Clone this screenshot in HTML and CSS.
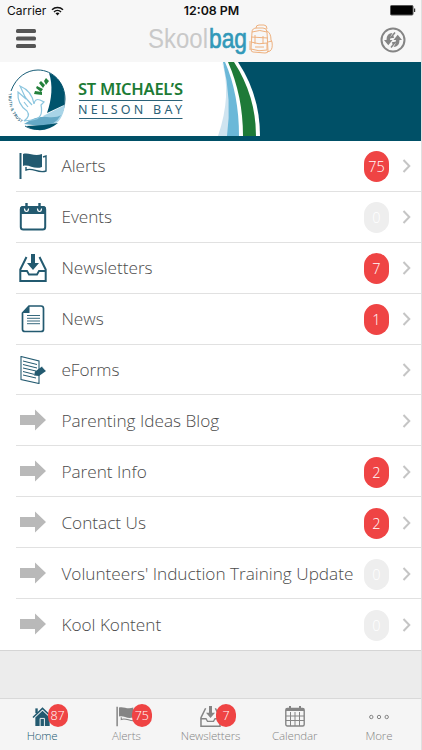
FILE: index.html
```html
<!DOCTYPE html>
<html lang="en">
<head>
    <meta charset="UTF-8">
    <meta name="viewport" content="width=device-width, initial-scale=1.0">
    <title>Skoolbag</title>
    <link rel="stylesheet" href="styles.css">
</head>
<body>
    <!-- shared icons -->
    <svg class="defs" width="0" height="0">
        <symbol id="flag" viewBox="0 0 28 28">
            <path d="M.5 1h2v26h-2z" fill="currentColor"/>
            <path d="M4 2c6-2 11 3 19 0v13c-8 3-13-3-19-1z" fill="currentColor"/>
            <path d="M24 5l3-1v15c-8 3-13-4-20-1v-3" fill="none" stroke="currentColor" stroke-width="1.4"/>
        </symbol>
        <symbol id="inbox" viewBox="0 0 28 28">
            <path d="M7.500 3L1.300 15.500V27h25.400V15.500L20.500 3" fill="none" stroke="currentColor" stroke-width="2"/>
            <path d="M1 17h7l2 3.500h8l2-3.500h7" fill="none" stroke="currentColor" stroke-width="1.800"/>
            <path d="M12 0h4v9h4l-6 7-6-7h4z" fill="currentColor"/>
        </symbol>
        <symbol id="arrow" viewBox="0 0 28 22">
            <path d="M1 6h15V.5l11 10.500-11 10.500V16H1z" fill="currentColor"/>
        </symbol>
        <symbol id="chevron" viewBox="0 0 10 16">
            <path d="M1.500 2l5.800 6-5.800 6" fill="none" stroke="#c5c5c5" stroke-width="2"/>
        </symbol>
    </svg>

    <div class="app">
        <header class="header">
            <div class="status">
                <span class="carrier">Carrier
                    <svg width="13" height="10" viewBox="0 0 13 10">
                        <path d="M1 3.700a8 8 0 0 1 11 0M3 6a5 5 0 0 1 7 0" fill="none" stroke="#111" stroke-width="1.500"/>
                        <path d="M4.500 7.300a3 3 0 0 1 4 0l-2 2.200z" fill="#111"/>
                    </svg>
                </span>
                <span class="time">12:08 PM</span>
                <svg class="battery" width="26" height="11" viewBox="0 0 26 11">
                    <rect x=".5" y=".5" width="22.500" height="9.500" rx="1" fill="#000" stroke="#555"/>
                    <path d="M24 3.500h1.200v3.500H24z" fill="#333"/>
                </svg>
            </div>
            <div class="toolbar">
                <svg class="menu" width="20" height="20" viewBox="0 0 20 20" fill="#555">
                    <rect y="0" width="20" height="4" rx="1.500"/>
                    <rect y="7.500" width="20" height="4" rx="1.500"/>
                    <rect y="15" width="20" height="4" rx="1.500"/>
                </svg>
                <svg class="logo" width="126" height="34" viewBox="0 0 126 34">
                    <text x="0" y="25" fill="#c9c9c9" textLength="60" lengthAdjust="spacingAndGlyphs">Skool</text>
                    <text x="61" y="25" fill="#3299b9" stroke="#3299b9" stroke-width=".7" textLength="38" lengthAdjust="spacingAndGlyphs">bag</text>
                    <g fill="none" stroke="#eeb17f" stroke-width="1">
                        <path d="M104 9q0-4 5-4h6q4 0 4 4l1 19q0 2-3 2l-12-1q-2 0-2-3z"/>
                        <path d="M108 5q0-3 3-3h5q3 0 3 4M103 14l17 1M104 9q8-3 15 0M102 18v9M103 19q8 3 16 1v7q-8 2-16-1M107 12v9M115 13v8"/>
                        <path d="M119 8q4 2 4 9l1 2q1 7-2 9l-3 1M120 19l4-1M107 24h9"/>
                    </g>
                </svg>
                <svg width="26" height="26" viewBox="0 0 26 26">
                    <circle cx="13" cy="13" r="11.500" fill="none" stroke="#858585" stroke-width="2"/>
                    <path d="M12.500 6q-6 0-6 7H4l4.300 5.200 4.200-5.200H10q0-4 2.500-7zM13.500 20q6 0 6-7H22l-4.300-5.200-4.200 5.200H16q0 4-2.500 7z" fill="#858585"/>
                    <path d="M15 5.500l-4 5 3-.5M11 20.500l4-5-3 .5" fill="none" stroke="#858585" stroke-width="1.500"/>
                </svg>
            </div>
        </header>

        <svg class="banner" width="421" height="79" viewBox="0 0 421 79">
            <rect width="421" height="79" fill="#005067"/>
            <path d="M0 0h238q22 33 22 74H0z" fill="#fff"/>
            <path d="M222 0q10 33-4 74h12q7-38-8-74z" fill="#cfe4f0"/>
            <path d="M223 0q9 38 4 74h12q0-42-14-74z" fill="#6bb8d8"/>
            <path d="M228 0h6q22 34 22 74h-13q0-40-15-74z" fill="#1e7a38"/>
            <!-- school crest -->
            <path d="M11 29C16 15 27 8 38 8c15 0 27 13 27 29 0 15-10 27-23 30-6 1-12 0-17-3" fill="none" stroke="#175d77" stroke-width="1"/>
            <path d="M49 11c12 5 18 18 15 32l-17 8c5-14 6-28 2-40z" fill="#00536c"/>
            <path d="M43 54l22-11c-2 12-6 18-13 20z" fill="#a8d4e7"/>
            <path d="M24 62q13-9 23-7 10 1 14-2-6 11-20 11z" fill="#65a9c6"/>
            <path d="M26 64q16 0 32-3-12 10-26 6z" fill="#00536c"/>
            <g fill="none" stroke="#8cc6df" stroke-width="1.200">
                <path d="M24 59q7-5 3-10Q17 42 18 30l8 7-6-13q12 5 14 18 1-6 6-4l4 2-3 3q3 14-9 15z"/>
                <path d="M24 40l4 5M24 34l8 9"/>
            </g>
            <path d="M35 29l7 1v3l-8-1zM37 24l6 3-2 3-5-4zM41 19l4 4-2 3-4-5zM46 16l3 3-3 4-2-4z" fill="#23803b"/>
            <path id="motto" d="M8.500 31C8 46 13 56 23 62" fill="none"/>
            <text class="motto"><textPath href="#motto" textLength="34">TRUTH &amp; TRUST</textPath></text>
            <text class="school" x="78" y="33" textLength="105">ST MICHAEL’S</text>
            <path d="M79 38.500h103.500M79 56.500h103.500" stroke="#2a6278" stroke-width="1"/>
            <text class="place" x="78" y="52" textLength="104">NELSON BAY</text>
        </svg>

        <main class="list">
            <div class="row">
                <svg class="icon" width="28" height="28"><use href="#flag"/></svg>
                <span class="label">Alerts</span>
                <span class="badge">75</span>
                <svg class="chevron" width="10" height="16"><use href="#chevron"/></svg>
            </div>
            <div class="row">
                <svg class="icon" width="28" height="28" viewBox="0 0 28 28">
                    <rect x="1.800" y="4" width="24.400" height="22.500" rx="2.500" fill="#fff" stroke="currentColor" stroke-width="2"/>
                    <path d="M1 11V6q0-3 3-3h20q3 0 3 3v5z" fill="currentColor"/>
                    <path d="M5.500 5.500q0 3 2 3t2-3M18.500 5.500q0 3 2 3t2-3" fill="none" stroke="#fff" stroke-width="1.200"/>
                    <path d="M7.500 0v6M20.500 0v6" stroke="currentColor" stroke-width="2.400"/>
                </svg>
                <span class="label">Events</span>
                <span class="badge empty">0</span>
                <svg class="chevron" width="10" height="16"><use href="#chevron"/></svg>
            </div>
            <div class="row">
                <svg class="icon" width="28" height="28"><use href="#inbox"/></svg>
                <span class="label">Newsletters</span>
                <span class="badge">7</span>
                <svg class="chevron" width="10" height="16"><use href="#chevron"/></svg>
            </div>
            <div class="row">
                <svg class="icon" width="28" height="28" viewBox="0 0 28 28">
                    <path d="M10 1h12q2.500 0 2.500 2.500v21q0 2-2.500 2H6q-2.500 0-2.500-2V8z" fill="#fff" stroke="currentColor" stroke-width="1.700"/>
                    <path d="M10.500 1v7h-7z" fill="currentColor"/>
                    <path d="M8 10.500h13M8 13.300h13M8 16h13M8 18.700h13" stroke="currentColor" stroke-width=".9"/>
                </svg>
                <span class="label">News</span>
                <span class="badge">1</span>
                <svg class="chevron" width="10" height="16"><use href="#chevron"/></svg>
            </div>
            <div class="row">
                <svg class="icon" width="28" height="28" viewBox="0 0 28 28">
                    <path d="M2 .5l18 4.500v22.500L2 23.500z" fill="#fff" stroke="currentColor" stroke-width="1.100"/>
                    <path d="M4 5l14 3.500M4 8.500L18 12M4 12l13 3M4 15.500l11 2.800M4 19l13 3" stroke="currentColor" stroke-width="1"/>
                    <path d="M15 19.500l1-4 7-5 4 4.500-7 5z" fill="currentColor"/>
                    <path d="M23.500 11l3 3.500" stroke="#fff" stroke-width=".6"/>
                </svg>
                <span class="label">eForms</span>
                <svg class="chevron" width="10" height="16"><use href="#chevron"/></svg>
            </div>
            <div class="row">
                <svg class="icon arrow" width="28" height="22"><use href="#arrow"/></svg>
                <span class="label">Parenting Ideas Blog</span>
                <svg class="chevron" width="10" height="16"><use href="#chevron"/></svg>
            </div>
            <div class="row">
                <svg class="icon arrow" width="28" height="22"><use href="#arrow"/></svg>
                <span class="label">Parent Info</span>
                <span class="badge">2</span>
                <svg class="chevron" width="10" height="16"><use href="#chevron"/></svg>
            </div>
            <div class="row">
                <svg class="icon arrow" width="28" height="22"><use href="#arrow"/></svg>
                <span class="label">Contact Us</span>
                <span class="badge">2</span>
                <svg class="chevron" width="10" height="16"><use href="#chevron"/></svg>
            </div>
            <div class="row">
                <svg class="icon arrow" width="28" height="22"><use href="#arrow"/></svg>
                <span class="label">Volunteers' Induction Training Update</span>
                <span class="badge empty">0</span>
                <svg class="chevron" width="10" height="16"><use href="#chevron"/></svg>
            </div>
            <div class="row">
                <svg class="icon arrow" width="28" height="22"><use href="#arrow"/></svg>
                <span class="label">Kool Kontent</span>
                <span class="badge empty">0</span>
                <svg class="chevron" width="10" height="16"><use href="#chevron"/></svg>
            </div>
        </main>

        <nav class="tabs">
            <div class="tab active">
                <div class="tab-icon">
                    <svg width="21" height="21" viewBox="0 0 22 21">
                        <path d="M3.500 2h2.500v5H3.500z" fill="currentColor"/>
                        <path d="M1 11.500L11 2l10 9.500" fill="none" stroke="currentColor" stroke-width="1.600"/>
                        <path d="M3.500 11.500L11 4.500l7.500 7v9h-15z" fill="currentColor"/>
                        <path d="M8.500 20.500v-8h4.500v8" fill="none" stroke="#f5f5f5" stroke-width="1"/>
                    </svg>
                    <span class="count">87</span>
                </div>
                Home
            </div>
            <div class="tab">
                <div class="tab-icon">
                    <svg width="21" height="21"><use href="#flag"/></svg>
                    <span class="count">75</span>
                </div>
                Alerts
            </div>
            <div class="tab">
                <div class="tab-icon">
                    <svg width="21" height="21"><use href="#inbox"/></svg>
                    <span class="count">7</span>
                </div>
                Newsletters
            </div>
            <div class="tab">
                <div class="tab-icon">
                    <svg width="20" height="21" viewBox="0 0 20 21">
                        <rect x=".8" y="2.500" width="18.400" height="17.500" rx="1.500" fill="none" stroke="currentColor" stroke-width="1.400"/>
                        <path d="M1 2h18v3H1zM4 0h2v3H4zM14 0h2v3h-2z" fill="currentColor"/>
                        <path d="M1 10h18M1 14.500h18M5.500 6v14M10 6v14M14.500 6v14" stroke="currentColor" stroke-width="1"/>
                    </svg>
                </div>
                Calendar
            </div>
            <div class="tab">
                <div class="tab-icon">
                    <svg width="20" height="21" viewBox="0 0 20 21" fill="none" stroke="currentColor">
                        <circle cx="2.300" cy="11" r="1.700"/>
                        <circle cx="10" cy="11" r="1.700"/>
                        <circle cx="17.700" cy="11" r="1.700"/>
                    </svg>
                </div>
                More
            </div>
        </nav>
    </div>
</body>
</html>
```
FILE: styles.css
```css
* {
    box-sizing: border-box;
}
body {
    margin: 0;
    background: #e0e0e0;
    font-family: 'Open Sans', sans-serif;
    font-weight: 300;
}
svg {
    display: block;
    flex: none;
}
.defs {
    position: absolute;
}
.app {
    width: 421px;
    height: 750px;
    display: flex;
    flex-direction: column;
    background: #ececec;
    overflow: hidden;
}
.header {
    height: 62px;
    background: #f7f7f7;
}
.status {
    height: 21px;
    padding: 0 5px 0 7px;
    display: grid;
    grid-template-columns: 1fr auto 1fr;
    align-items: center;
    font-family: Inter, sans-serif;
    font-size: 12px;
    color: #111;
}
.carrier {
    display: flex;
    align-items: center;
    gap: 5px;
    font-weight: 400;
}
.time {
    font-size: 12.4px;
    font-weight: 600;
}
.battery {
    justify-self: end;
}
.toolbar {
    height: 37px;
    padding: 0 15px 0 16px;
    display: flex;
    justify-content: space-between;
    align-items: center;
}
.menu {
    margin-top: -2px;
}
.logo {
    margin-left: 6px;
    overflow: visible;
    font-family: 'Liberation Sans Narrow', 'Liberation Sans', sans-serif;
    font-size: 28px;
    font-weight: 400;
}
.motto {
    font-size: 4px;
    font-weight: 600;
    fill: #175d77;
}
.school {
    font-family: 'Noto Sans', sans-serif;
    font-size: 16.5px;
    font-weight: 600;
    fill: #1d7b35;
}
.place {
    font-family: 'Noto Sans', sans-serif;
    font-size: 12.5px;
    font-weight: 400;
    fill: #2a6278;
}
.list {
    background: #fff;
    border-bottom: 1px solid #d5d5d5;
}
.row {
    height: 50.9px;
    margin-left: 16px;
    padding: 0 9px 0 3px;
    display: flex;
    align-items: center;
    border-bottom: 1px solid #e1e1e1;
}
.row:last-child {
    border-bottom: none;
}
.icon {
    margin-top: 1px;
    color: #235a70;
}
.arrow {
    margin-top: 0;
    color: #b9b9b9;
}
.chevron {
    margin-top: 1px;
}
.label {
    flex: 1;
    margin-left: 14.4px;
    font-size: 17.2px;
    color: #4c4c4c;
    white-space: nowrap;
}
.badge {
    width: 25px;
    height: 31px;
    margin-top: 2px;
    margin-right: 13px;
    border-radius: 12.5px;
    background: #ef4444;
    color: #fff;
    font-size: 14.5px;
    line-height: 31px;
    text-align: center;
}
.badge.empty {
    background: #eee;
    color: #fff;
}
.tabs {
    height: 52px;
    margin-top: auto;
    padding-top: 7px;
    display: grid;
    grid-template-columns: repeat(5, 1fr);
    background: #f5f5f5;
    border-top: 1px solid #d9d9d9;
}
.tab {
    display: flex;
    flex-direction: column;
    align-items: center;
    font-size: 11.5px;
    font-weight: 300;
    letter-spacing: -0.15px;
    line-height: 17px;
    color: #858585;
}
.tab.active {
    color: #235a70;
}
.tab-icon {
    position: relative;
    height: 21px;
}
.count {
    position: absolute;
    left: 16px;
    top: -2px;
    width: 20px;
    height: 23px;
    border-radius: 10px;
    background: #ef4444;
    color: #fff;
    font-size: 12.5px;
    line-height: 23px;
    text-align: center;
}
```
